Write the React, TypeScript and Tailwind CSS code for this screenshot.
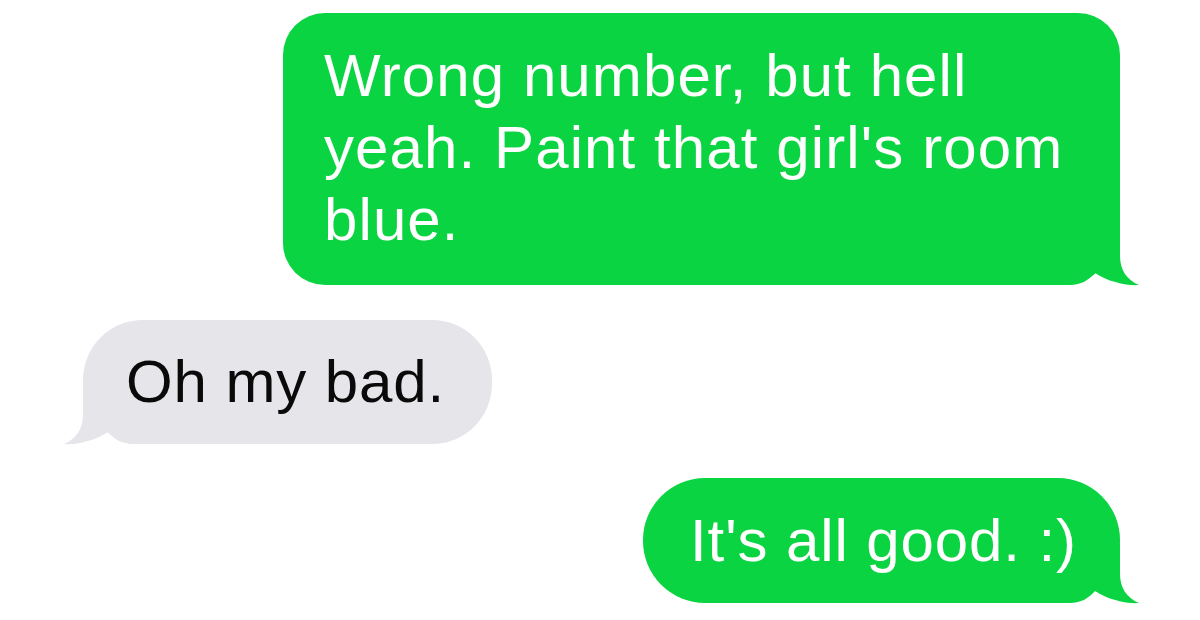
const GREEN = "#0bd442";
const GRAY = "#e5e5ea";

const Tail = ({ color, flip = false }: { color: string; flip?: boolean }) => (
  <svg
    width="85"
    height="70"
    viewBox="0 0 85 70"
    className={`absolute bottom-[-5px] ${flip ? "left-[-25px] -scale-x-100" : "right-[-25px]"}`}
  >
    <path
      d="M0 5 L60 5 L60 36 C60 50 67 60 79 65 C68 66 48 62 35 53 C29 60 21 65 10 65 L0 65 Z"
      fill={color}
    />
  </svg>
);

export default function App() {
  return (
    <div
      className="w-[1200px] h-[620px] bg-white flex flex-col pt-[13px] overflow-hidden"
      style={{ fontFamily: '"Liberation Sans", Arial, sans-serif' }}
    >
      {/* outgoing */}
      <div className="relative self-end mr-[80px] w-[837px] h-[272px] bg-[#0bd442] rounded-[42px] rounded-br-[60px] pl-[41px] pt-[27px]">
        <Tail color={GREEN} />
        <p className="relative text-white text-[60px] leading-[72px] tracking-[1.1px]">
          Wrong number, but hell
          <br />
          yeah. Paint that girl's room
          <br />
          blue.
        </p>
      </div>

      {/* incoming */}
      <div className="relative self-start ml-[83px] mt-[35px] w-[409px] h-[124px] bg-[#e5e5ea] rounded-[60px] pl-[43px] flex items-center">
        <Tail color={GRAY} flip />
        <p className="relative text-[#0a0a0a] text-[60px] leading-[72px] tracking-[0.9px]">Oh my bad.</p>
      </div>

      {/* outgoing */}
      <div className="relative self-end mr-[80px] mt-[34px] w-[477px] h-[125px] bg-[#0bd442] rounded-[62px] pl-[47px] flex items-center">
        <Tail color={GREEN} />
        <p className="relative text-white text-[60px] leading-[72px] tracking-[0.9px]">It's all good. :)</p>
      </div>
    </div>
  );
}
